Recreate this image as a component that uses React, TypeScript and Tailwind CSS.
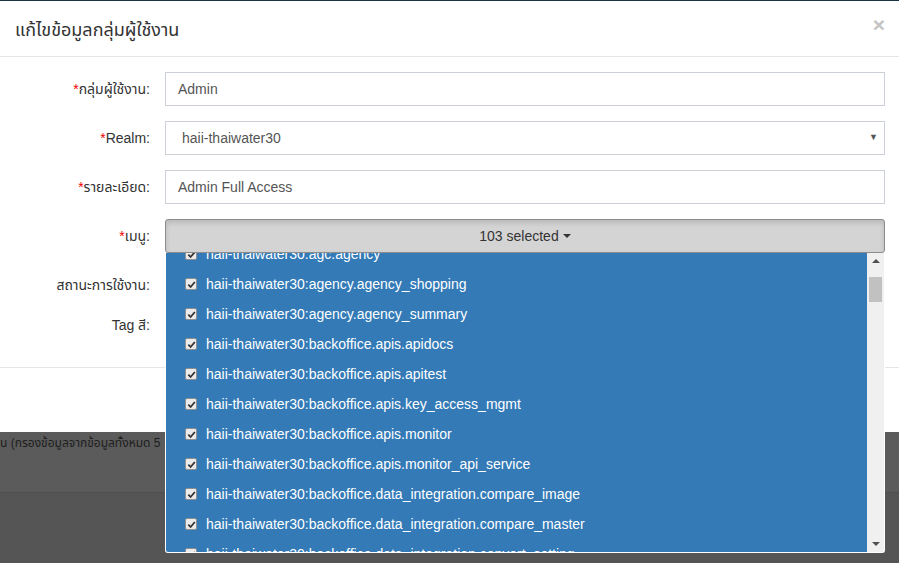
import React from "react";

const items = [
  "haii-thaiwater30:agc.agency",
  "haii-thaiwater30:agency.agency_shopping",
  "haii-thaiwater30:agency.agency_summary",
  "haii-thaiwater30:backoffice.apis.apidocs",
  "haii-thaiwater30:backoffice.apis.apitest",
  "haii-thaiwater30:backoffice.apis.key_access_mgmt",
  "haii-thaiwater30:backoffice.apis.monitor",
  "haii-thaiwater30:backoffice.apis.monitor_api_service",
  "haii-thaiwater30:backoffice.data_integration.compare_image",
  "haii-thaiwater30:backoffice.data_integration.compare_master",
  "haii-thaiwater30:backoffice.data_integration.convert_setting",
];

const Label = ({ text, req }: { text: string; req?: boolean }) => (
  <div className="w-[150px] shrink-0 pt-[7px] text-right text-[14px] leading-5 text-[#333]">
    {req && <span className="text-[#e00]">*</span>}
    {text}
  </div>
);

const Check = () => (
  <span className="flex h-[12px] w-[12px] shrink-0 items-center justify-center rounded-[2px] border border-[#8f8f8f] bg-[#ebebeb]">
    <svg width="9" height="9" viewBox="0 0 10 10">
      <path d="M1.5 5.2 L4 7.8 L8.7 2.2" fill="none" stroke="#333" strokeWidth="2" />
    </svg>
  </span>
);

const App: React.FC = () => {
  return (
    <div
      className="flex h-[563px] w-[899px] flex-col overflow-hidden bg-[#555]"
      style={{ fontFamily: '"Liberation Sans", "Noto Sans Thai", "Noto Sans", sans-serif' }}
    >
      <div className="h-px bg-[#1b3442]" />
      {/* modal */}
      <div className="bg-white">
        {/* header */}
        <div className="flex h-[56px] items-center justify-between border-b border-[#e5e5e5] pl-[15px] pr-[14px]">
          <h4 className="pt-[4px] text-[18px] text-[#333]">แก้ไขข้อมูลกลุ่มผู้ใช้งาน</h4>
          <span className="-mt-[8px] text-[21px] font-bold leading-none text-[#c4c4c4]">×</span>
        </div>

        {/* body */}
        <div className="flex flex-col gap-[15px] px-0 pt-[15px] pb-[25px]">
          <div className="flex gap-[15px]">
            <Label text="กลุ่มผู้ใช้งาน:" req />
            <div className="flex h-[34px] w-[720px] items-center border border-[#ccd1d9] px-[12px] text-[14px] text-[#555]">
              Admin
            </div>
          </div>

          <div className="flex gap-[15px]">
            <Label text="Realm:" req />
            <div className="flex h-[34px] w-[720px] items-center justify-between border border-[#ccd1d9] pl-[16px] pr-[6px] text-[14px] text-[#555]">
              <span>haii-thaiwater30</span>
              <span className="text-[9px] text-[#555]">▼</span>
            </div>
          </div>

          <div className="flex gap-[15px]">
            <Label text="รายละเอียด:" req />
            <div className="flex h-[34px] w-[720px] items-center border border-[#ccd1d9] px-[12px] text-[14px] text-[#555]">
              Admin Full Access
            </div>
          </div>

          <div className="flex gap-[15px]">
            <Label text="เมนู:" req />
            <div className="relative w-[720px]">
              <div className="flex h-[34px] items-center justify-center rounded-[3px] border border-[#8c8c8c] bg-[#d4d4d4] text-[14px] text-[#333] shadow-[inset_0_3px_5px_rgba(0,0,0,0.125)]">
                103 selected
                <span className="ml-[4px] inline-block border-x-[4px] border-t-[4px] border-x-transparent border-t-[#333]" />
              </div>

              {/* dropdown list */}
              <div className="absolute top-[34px] left-0 z-10 flex h-[300px] w-[720px] overflow-hidden rounded-b-[3px] border border-t-0 border-white bg-white">
                <div className="h-full flex-1 overflow-hidden bg-[#337ab7]">
                  <div className="-mt-[14px] flex flex-col">
                    {items.map((t) => (
                      <div key={t} className="flex h-[30px] items-center gap-[9px] pl-[19px] text-[14px] text-white">
                        <Check />
                        <span>{t}</span>
                      </div>
                    ))}
                  </div>
                </div>
                {/* scrollbar */}
                <div className="flex w-[17px] flex-col items-center bg-[#f0f0f0]">
                  <span className="mt-[6px] border-x-[4px] border-b-[4px] border-x-transparent border-b-[#505050]" />
                  <span className="mt-[14px] h-[25px] w-[13px] bg-[#c1c1c1]" />
                  <span className="flex-1" />
                  <span className="mb-[6px] border-x-[4px] border-t-[4px] border-x-transparent border-t-[#505050]" />
                </div>
              </div>
            </div>
          </div>

          <div className="flex h-[25px] gap-[15px]">
            <Label text="สถานะการใช้งาน:" />
          </div>

          <div className="flex h-[34px] gap-[15px]">
            <Label text="Tag สี:" />
          </div>
        </div>

        {/* footer */}
        <div className="h-[65px] border-t border-[#e5e5e5]" />
      </div>

      {/* page behind backdrop */}
      <div className="flex h-[61px] flex-col border-b border-[#4f4f4f] bg-[#5b5b5b]">
        <div className="pt-[1px] text-[12px] leading-5 text-[#1e1e1e]">น (กรองข้อมูลจากข้อมูลทั้งหมด 5</div>
      </div>
      <div className="flex-1 bg-[#555]" />
    </div>
  );
};

export default App;
